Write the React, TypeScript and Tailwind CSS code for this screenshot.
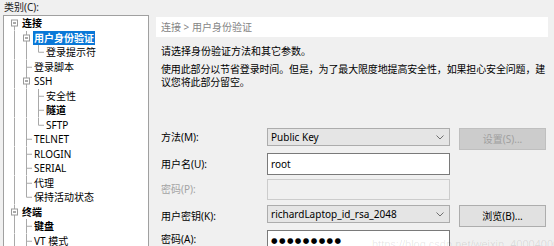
import React from "react";

type Own = "box" | "tee" | "elbow";

interface TreeRow {
  label: string;
  guides: boolean[];
  own: Own;
  up?: boolean;
  down?: boolean;
  bold?: boolean;
  selected?: boolean;
}

const rows: TreeRow[] = [
  { label: "连接", guides: [], own: "box", down: true, bold: true },
  { label: "用户身份验证", guides: [true], own: "box", up: true, down: true, bold: true, selected: true },
  { label: "登录提示符", guides: [true, true], own: "elbow" },
  { label: "登录脚本", guides: [true], own: "tee" },
  { label: "SSH", guides: [true], own: "box", up: true, down: true },
  { label: "安全性", guides: [true, true], own: "tee" },
  { label: "隧道", guides: [true, true], own: "tee", bold: true },
  { label: "SFTP", guides: [true, true], own: "elbow" },
  { label: "TELNET", guides: [true], own: "tee" },
  { label: "RLOGIN", guides: [true], own: "tee" },
  { label: "SERIAL", guides: [true], own: "tee" },
  { label: "代理", guides: [true], own: "tee" },
  { label: "保持活动状态", guides: [true], own: "elbow" },
  { label: "终端", guides: [], own: "box", up: true, down: true, bold: true },
  { label: "键盘", guides: [true], own: "tee", bold: true },
  { label: "VT 模式", guides: [true], own: "tee" },
];

const LINE = "#a9a9a9";

// one 12px column of the tree's guide lines
function Cell({ kind, up, down }: { kind: "guide" | "blank" | Own; up?: boolean; down?: boolean }) {
  const h = 14.5;
  const m = 7.25;
  return (
    <svg width="12" height={h} viewBox={`0 0 12 ${h}`} className="shrink-0 block">
      {kind === "guide" && <line x1="6.5" y1="0" x2="6.5" y2={h} stroke={LINE} />}
      {kind === "tee" && (
        <>
          <line x1="6.5" y1="0" x2="6.5" y2={h} stroke={LINE} />
          <line x1="6.5" y1={m} x2="12" y2={m} stroke={LINE} />
        </>
      )}
      {kind === "elbow" && (
        <>
          <line x1="6.5" y1="0" x2="6.5" y2={m} stroke={LINE} />
          <line x1="6.5" y1={m} x2="12" y2={m} stroke={LINE} />
        </>
      )}
      {kind === "box" && (
        <>
          {up && <line x1="6.5" y1="0" x2="6.5" y2="4" stroke={LINE} />}
          {down && <line x1="6.5" y1="10" x2="6.5" y2={h} stroke={LINE} />}
          <rect x="3.5" y="4" width="6" height="6" fill="#fff" stroke="#9a9a9a" />
          <line x1="5" y1="7" x2="8" y2="7" stroke="#555" />
        </>
      )}
    </svg>
  );
}

function Tree() {
  return (
    <div className="flex flex-col">
      {rows.map((r) => (
        <div key={r.label} className="flex items-center h-[14.5px]">
          {r.guides.map((g, i) => (
            <Cell key={i} kind={g ? "guide" : "blank"} />
          ))}
          <Cell kind={r.own} up={r.up} down={r.down} />
          <span
            className={`ml-[1px] px-[1px] h-[14px] leading-[14px] whitespace-nowrap ${
              r.bold ? "font-bold" : ""
            } ${r.selected ? "bg-[#0a78d7] text-white" : "text-black"}`}
          >
            {r.label}
          </span>
        </div>
      ))}
    </div>
  );
}

function Chevron() {
  return (
    <svg width="8" height="5" viewBox="0 0 8 5" className="mr-[5px]">
      <path d="M0.5 0.5 L4 4 L7.5 0.5" fill="none" stroke="#707070" strokeWidth="1" />
    </svg>
  );
}

export default function App() {
  return (
    <div className="relative w-[554px] h-[246px] overflow-hidden bg-[#f0f0f0] flex text-[10px] text-black font-['Noto_Sans','Noto_Sans_CJK_SC',sans-serif]">
      {/* 类别 tree */}
      <div className="w-[156px] shrink-0 pl-[3px] flex flex-col">
        <div className="h-[17px] leading-[15px] pl-[1px] text-[#1a1a1a]">类别(C):</div>
        <div className="w-[146px] h-[240px] shrink-0 bg-white border border-[#a0a0a0] pl-[4px]">
          <Tree />
        </div>
      </div>

      {/* 右侧面板 */}
      <div className="w-[392px] shrink-0 flex flex-col">
        <div className="mt-[17px] h-[20px] bg-white pl-[5px] leading-[20px] text-[#858585]">
          连接 &gt; 用户身份验证
        </div>
        <p className="mt-[8px] pl-[5px] leading-[13px] whitespace-nowrap">请选择身份验证方法和其它参数。</p>
        <p className="mt-[5px] pl-[5px] leading-[13px] whitespace-nowrap tracking-[-0.15px]">
          使用此部分以节省登录时间。但是，为了最大限度地提高安全性，如果担心安全问题，建
          <br />
          议您将此部分留空。
        </p>

        <div className="mt-[39px] flex flex-col">
          <div className="flex items-start h-[25px]">
            <div className="w-[111px] pl-[5px] h-[18px] flex items-center">方法(M):</div>
            <div className="w-[183px] h-[18px] border border-[#acacac] bg-[#e5e5e5] flex items-center justify-between pl-[3px]">
              <span>Public Key</span>
              <Chevron />
            </div>
            <button className="ml-[9px] w-[87px] h-[22px] border border-[#bfbfbf] bg-[#cccccc] text-[#a0a0a0]">
              设置(S)...
            </button>
          </div>

          <div className="flex items-start h-[26px]">
            <div className="w-[111px] pl-[5px] h-[22px] flex items-center">用户名(U):</div>
            <div className="w-[183px] h-[22px] border border-[#7a7a7a] bg-white flex items-center pl-[3px]">root</div>
          </div>

          <div className="flex items-start h-[26px]">
            <div className="w-[111px] pl-[5px] h-[21px] flex items-center text-[#a3a3a3]">密码(P):</div>
            <div className="w-[183px] h-[21px] border border-[#cccccc] bg-[#f0f0f0]" />
          </div>

          <div className="flex items-start h-[25px]">
            <div className="w-[111px] pl-[5px] h-[22px] flex items-center">用户密钥(K):</div>
            <div className="w-[183px] h-[18px] border border-[#acacac] bg-[#e5e5e5] flex items-center justify-between pl-[3px]">
              <span>richardLaptop_id_rsa_2048</span>
              <Chevron />
            </div>
            <button className="ml-[9px] w-[87px] h-[22px] border border-[#adadad] bg-[#e1e1e1]">浏览(B)...</button>
          </div>

          <div className="flex items-start h-[22px]">
            <div className="w-[111px] pl-[5px] h-[19px] flex items-center">密码(A):</div>
            <div className="w-[183px] h-[22px] border border-[#7a7a7a] bg-white flex items-center pl-[3px] font-['DejaVu_Sans',sans-serif] text-[7.5px] tracking-[1.4px]">
              ●●●●●●●●●
            </div>
          </div>
        </div>
      </div>

      <div className="absolute left-[372px] top-[236px] text-[11px] text-black/10 whitespace-nowrap font-['Liberation_Sans',sans-serif]">
        https://blog.csdn.net/weixin_40004000
      </div>
    </div>
  );
}
